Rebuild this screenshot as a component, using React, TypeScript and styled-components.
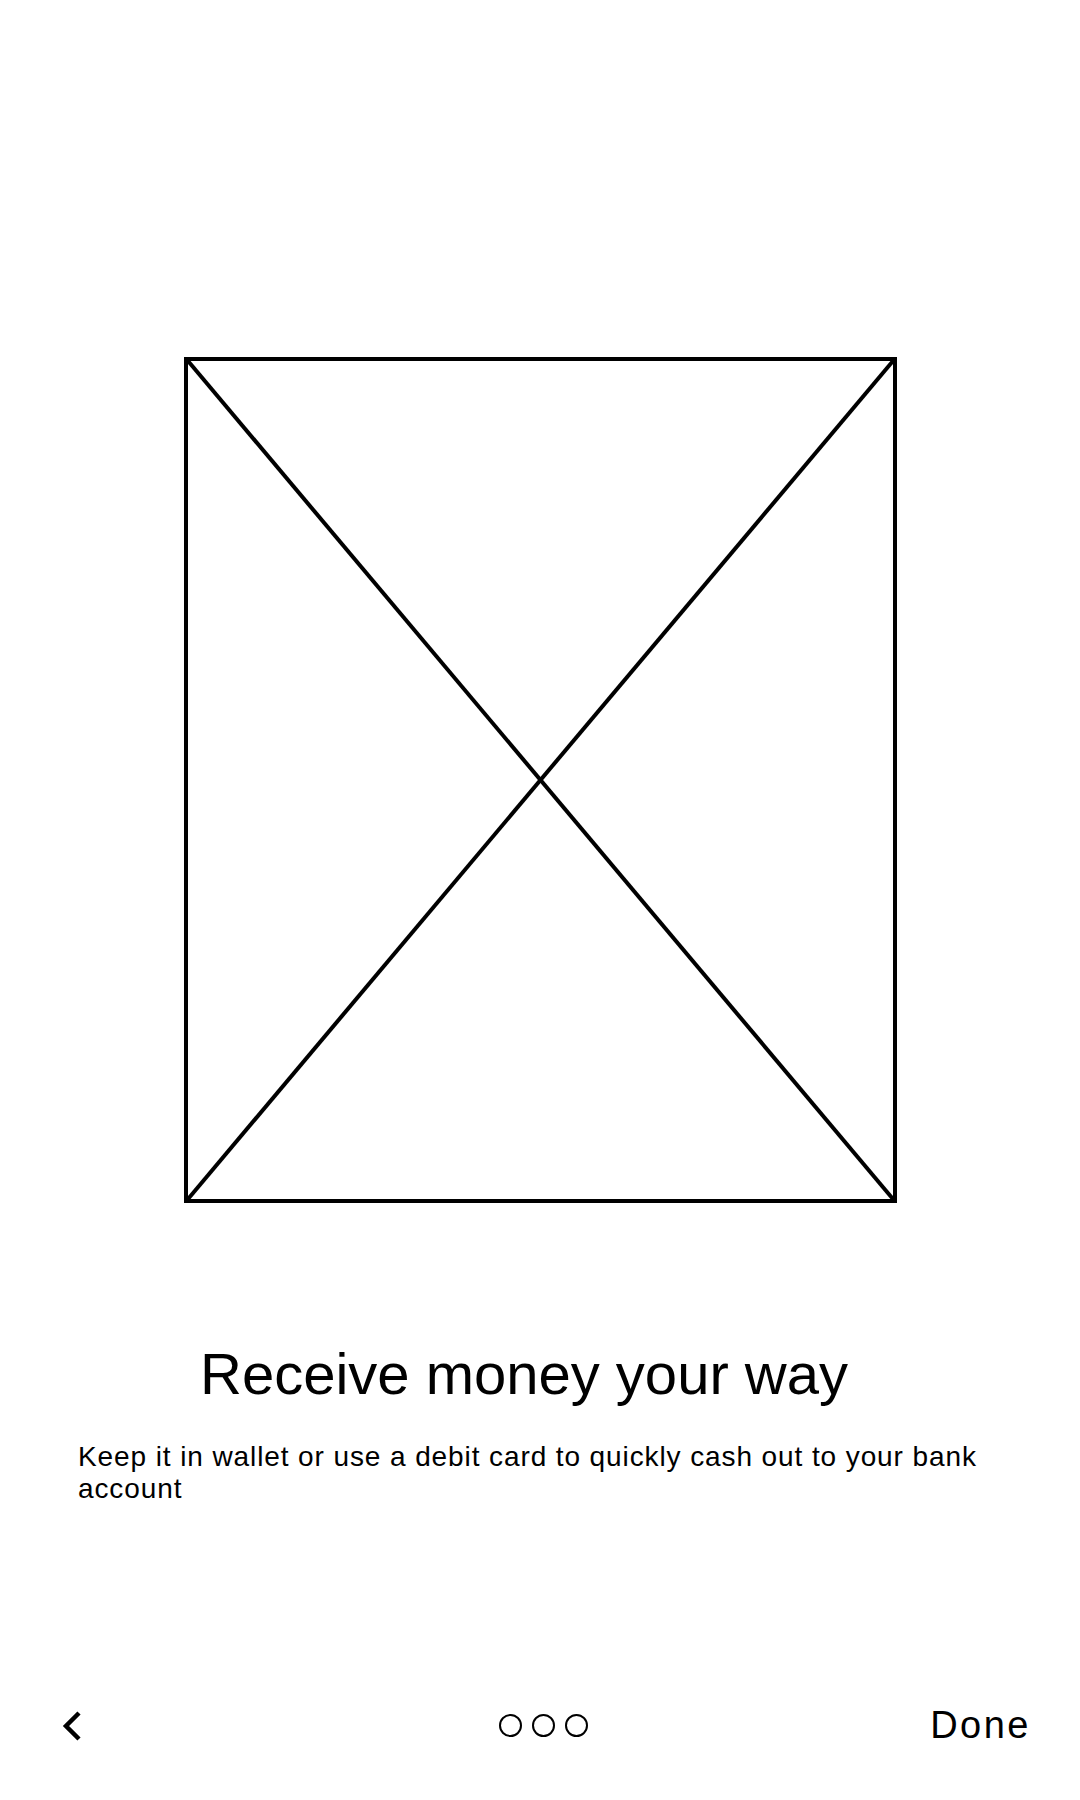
import React from "react";
import styled, { createGlobalStyle } from "styled-components";

const Global = createGlobalStyle`
  html, body { margin: 0; padding: 0; background: #ffffff; }
  body { font-family: "Liberation Sans", Arial, sans-serif; color: #000; }
`;

const Page = styled.div`
  width: 1080px;
  height: 1800px;
  display: flex;
  flex-direction: column;
  background: #fff;
`;

const Placeholder = styled.div`
  box-sizing: border-box;
  width: 713px;
  height: 846px;
  margin: 357px auto 0;
  border: 4px solid #000;
  display: flex;
`;

const Cross = styled.svg`
  width: 100%;
  height: 100%;
  display: block;
`;

const Title = styled.h1`
  margin: 138px 0 0;
  padding: 0 112px 0 80px;
  font-size: 58px;
  line-height: 65px;
  font-weight: 400;
  text-align: center;
  white-space: nowrap;
`;

const Body = styled.p`
  margin: 35px 0 0;
  padding: 0 60px 0 78px;
  font-size: 28px;
  line-height: 32px;
  letter-spacing: 0.9px;
`;

const Footer = styled.div`
  margin-top: auto;
  height: 60px;
  margin-bottom: 45px;
  padding: 0 49px 0 56px;
  display: grid;
  grid-template-columns: 1fr auto 1fr;
  align-items: center;
`;

const BackButton = styled.button`
  justify-self: start;
  background: none;
  border: none;
  padding: 0;
  width: 28px;
  height: 40px;
  display: flex;
  cursor: pointer;
`;

const Dots = styled.div`
  display: flex;
  gap: 10px;
`;

const Dot = styled.span`
  box-sizing: border-box;
  width: 23px;
  height: 23px;
  border-radius: 50%;
  border: 2.5px solid #000;
`;

const DoneButton = styled.button`
  justify-self: end;
  background: none;
  border: none;
  padding: 0;
  font-family: "Liberation Sans", Arial, sans-serif;
  font-size: 38px;
  line-height: 44px;
  letter-spacing: 2.5px;
  color: #000;
  cursor: pointer;
`;

export default function App() {
  return (
    <>
      <Global />
      <Page>
        <Placeholder>
          <Cross viewBox="0 0 100 100" preserveAspectRatio="none">
            <line x1="0" y1="0" x2="100" y2="100" stroke="#000" strokeWidth="4" vectorEffect="non-scaling-stroke" />
            <line x1="100" y1="0" x2="0" y2="100" stroke="#000" strokeWidth="4" vectorEffect="non-scaling-stroke" />
          </Cross>
        </Placeholder>
        <Title>Receive money your way</Title>
        <Body>
          Keep it in wallet or use a debit card to quickly cash out to your bank account
        </Body>
        <Footer>
          <BackButton aria-label="Back">
            <svg width="28" height="40" viewBox="0 0 28 40">
              <polyline points="23,8 10,21 23,34" fill="none" stroke="#000" strokeWidth="4.5" strokeLinecap="butt" strokeLinejoin="miter" />
            </svg>
          </BackButton>
          <Dots>
            <Dot />
            <Dot />
            <Dot />
          </Dots>
          <DoneButton>Done</DoneButton>
        </Footer>
      </Page>
    </>
  );
}
